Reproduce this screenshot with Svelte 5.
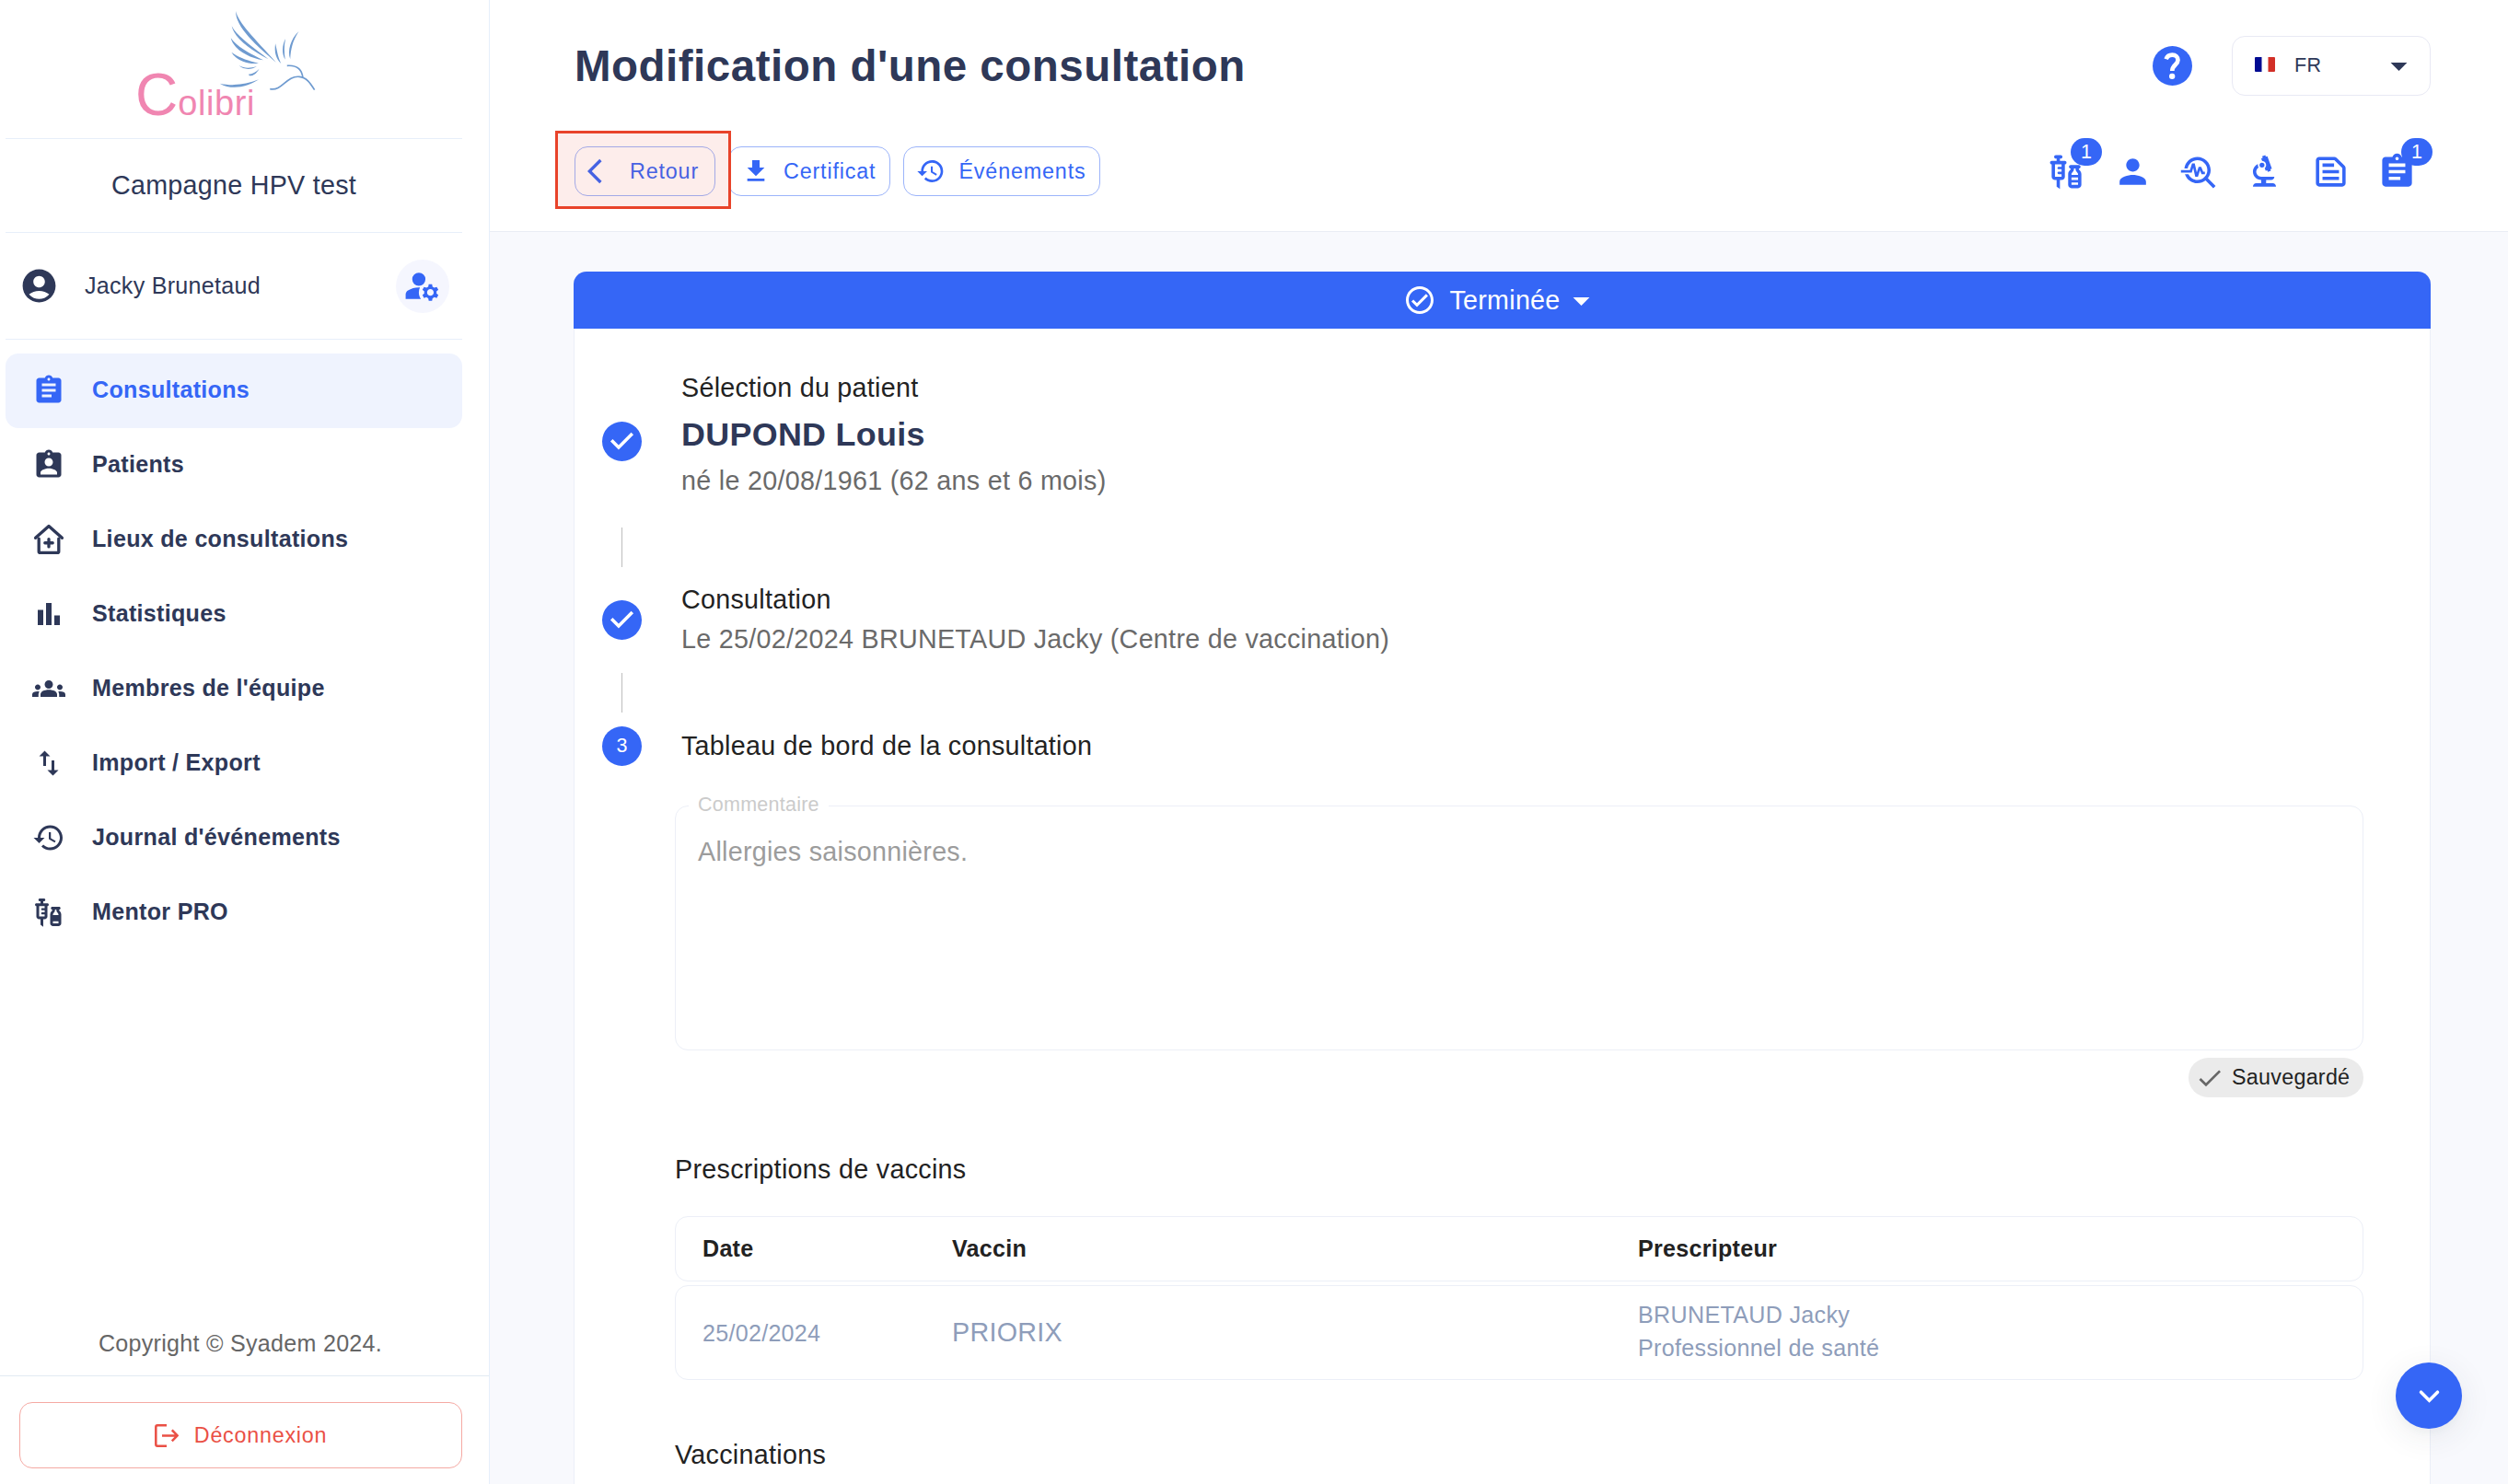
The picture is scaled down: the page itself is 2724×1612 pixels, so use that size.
<script>
  const icons = {
    assignment:
      'M19 3h-4.18C14.4 1.84 13.3 1 12 1s-2.4.84-2.82 2H5c-1.1 0-2 .9-2 2v14c0 1.1.9 2 2 2h14c1.1 0 2-.9 2-2V5c0-1.1-.9-2-2-2m-7 0c.55 0 1 .45 1 1s-.45 1-1 1-1-.45-1-1 .45-1 1-1m2 14H7v-2h7zm3-4H7v-2h10zm0-4H7V7h10z',
    assignmentInd:
      'M19 3h-4.18C14.4 1.84 13.3 1 12 1c-1.3 0-2.4.84-2.82 2H5c-1.1 0-2 .9-2 2v14c0 1.1.9 2 2 2h14c1.1 0 2-.9 2-2V5c0-1.1-.9-2-2-2zm-7 0c.55 0 1 .45 1 1s-.45 1-1 1-1-.45-1-1 .45-1 1-1zm0 4c1.66 0 3 1.34 3 3s-1.34 3-3 3-3-1.34-3-3 1.34-3 3-3zm6 12H6v-1.4c0-2 4-3.1 6-3.1s6 1.1 6 3.1V19z',
    bars: 'M4 9h4v11H4zm12 4h4v7h-4zm-6-9h4v16h-4z',
    groups:
      'M12 12.75c1.63 0 3.07.39 4.24.9 1.08.48 1.76 1.56 1.76 2.73V18H6v-1.61c0-1.18.68-2.26 1.76-2.73 1.17-.52 2.61-.91 4.24-.91M4 13c1.1 0 2-.9 2-2s-.9-2-2-2-2 .9-2 2 .9 2 2 2m1.13 1.1c-.37-.06-.74-.1-1.13-.1-.99 0-1.93.21-2.78.58C.48 14.9 0 15.62 0 16.43V18h4.5v-1.61c0-.83.23-1.61.63-2.29M20 13c1.1 0 2-.9 2-2s-.9-2-2-2-2 .9-2 2 .9 2 2 2m4 3.43c0-.81-.48-1.53-1.22-1.85-.85-.37-1.79-.58-2.78-.58-.39 0-.76.04-1.13.1.4.68.63 1.46.63 2.29V18H24zM12 6c1.66 0 3 1.34 3 3s-1.34 3-3 3-3-1.34-3-3 1.34-3 3-3',
    swap: 'M9 3 5 6.99h3V14h2V6.99h3zm7 14.01V10h-2v7.01h-3L15 21l4-3.99z',
    history:
      'M13 3c-4.97 0-9 4.03-9 9H1l3.89 3.89.07.14L9 12H6c0-3.87 3.13-7 7-7s7 3.13 7 7-3.13 7-7 7c-1.93 0-3.68-.79-4.94-2.06l-1.42 1.42C8.27 19.99 10.51 21 13 21c4.97 0 9-4.03 9-9s-4.03-9-9-9m-1 5v5l4.28 2.54.72-1.21-3.5-2.08V8z',
    vaccinesFilled:
      'M11 5.5H8V4h.5c.55 0 1-.45 1-1s-.45-1-1-1h-3c-.55 0-1 .45-1 1s.45 1 1 1H6v1.5H3c-.55 0-1 .45-1 1s.45 1 1 1V15c0 1.1.9 2 2 2h1v4l2 1.5V17h1c1.1 0 2-.9 2-2V7.5c.55 0 1-.45 1-1s-.45-1-1-1M9 9H7.25c-.41 0-.75.34-.75.75s.34.75.75.75H9V12H7.25c-.41 0-.75.34-.75.75s.34.75.75.75H9V15H5V7.5h4zm10.5 1.5V10c.55 0 1-.45 1-1s-.45-1-1-1h-5c-.55 0-1 .45-1 1s.45 1 1 1v.5c0 .5-1.5 1.16-1.5 3V20c0 1.1.9 2 2 2h4c1.1 0 2-.9 2-2v-6.5c0-1.84-1.5-2.5-1.5-3m-3 0V10h1v.5c0 1.6 1.5 2 1.5 3V14h-4v-.5c0-1 1.5-1.4 1.5-3M15 20v-1.5h4V20z',
    vaccines:
      'M11 5.5H8V4h.5c.55 0 1-.45 1-1s-.45-1-1-1h-3c-.55 0-1 .45-1 1s.45 1 1 1H6v1.5H3c-.55 0-1 .45-1 1s.45 1 1 1V15c0 1.1.9 2 2 2h1v4l2 1.5V17h1c1.1 0 2-.9 2-2V7.5c.55 0 1-.45 1-1s-.45-1-1-1M9 9H7.25c-.41 0-.75.34-.75.75s.34.75.75.75H9V12H7.25c-.41 0-.75.34-.75.75s.34.75.75.75H9V15H5V7.5h4zm10.5 1.5V10c.55 0 1-.45 1-1s-.45-1-1-1h-5c-.55 0-1 .45-1 1s.45 1 1 1v.5c0 .5-1.5 1.16-1.5 3V20c0 1.1.9 2 2 2h4c1.1 0 2-.9 2-2v-6.5c0-1.84-1.5-2.5-1.5-3m-3 0V10h1v.5c0 1.6 1.5 2 1.5 3V14h-4v-.5c0-1 1.5-1.4 1.5-3m2.5 5V17h-4v-1.5zM15 20v-1.5h4V20z',
    person:
      'M12 12c2.21 0 4-1.79 4-4s-1.79-4-4-4-4 1.79-4 4 1.79 4 4 4m0 2c-2.67 0-8 1.34-8 4v2h16v-2c0-2.66-5.33-4-8-4',
    troubleshoot:
      'm22 20.59-4.69-4.69C18.37 14.55 19 12.85 19 11c0-4.42-3.58-8-8-8-4.08 0-7.44 3.05-7.93 7h2.02C5.57 7.17 8.03 5 11 5c3.31 0 6 2.69 6 6s-2.69 6-6 6c-2.42 0-4.5-1.44-5.45-3.5H3.4C4.45 16.69 7.46 19 11 19c1.85 0 3.55-.63 4.9-1.69L20.59 22zM8.43 9.69 9.65 15h1.64l1.26-3.78.95 2.28h2V12h-1l-1.25-3h-1.54l-1.12 3.37L9.35 7H7.7l-1.25 4H1v1.5h6.55z',
    microscope:
      'M7 19c-1.1 0-2 .9-2 2h14c0-1.1-.9-2-2-2h-4v-2h3c1.1 0 2-.9 2-2h-8c-1.66 0-3-1.34-3-3 0-1.09.59-2.04 1.46-2.56C8.17 9.03 8 8.54 8 8c0-.21.04-.42.09-.62C6.28 8.13 5 9.92 5 12c0 2.76 2.24 5 5 5v2zM10.56 5.51C11.91 5.54 13 6.64 13 8c0 .75-.33 1.41-.85 1.87l.59 1.62.94-.34.34.94 1.88-.68-.34-.94.94-.34-2.74-7.52-.94.34-.34-.94-1.88.68.34.94-.94.35zM10.5 6.5a1.5 1.5 0 1 0 0 3 1.5 1.5 0 0 0 0-3',
    snippet:
      'M14.17 5 19 9.83V19H5V5zm0-2H5c-1.1 0-2 .9-2 2v14c0 1.1.9 2 2 2h14c1.1 0 2-.9 2-2V9.83c0-.53-.21-1.04-.59-1.41l-4.83-4.83c-.37-.38-.88-.59-1.41-.59M7 15h10v2H7zm0-4h10v2H7zm0-4h7v2H7z',
    account:
      'M12 2C6.48 2 2 6.48 2 12s4.48 10 10 10 10-4.48 10-10S17.52 2 12 2m0 4c1.93 0 3.5 1.57 3.5 3.5S13.93 13 12 13s-3.5-1.57-3.5-3.5S10.07 6 12 6m0 14c-2.03 0-4.43-.82-6.14-2.88C7.55 15.8 9.68 15 12 15s4.45.8 6.14 2.12C16.43 19.18 14.03 20 12 20',
    manage:
      'M10 4a4 4 0 1 0 0 8 4 4 0 0 0 0-8M10.67 13.02c-.22-.01-.44-.02-.67-.02-2.42 0-4.68.67-6.61 1.82-.88.52-1.39 1.5-1.39 2.53V20h9.26c-.79-1.13-1.26-2.51-1.26-4 0-1.07.25-2.07.67-2.98M20.75 16c0-.22-.03-.42-.06-.63l1.14-1.01-1-1.73-1.45.49c-.32-.27-.68-.48-1.08-.63L18 11h-2l-.3 1.49c-.4.15-.76.36-1.08.63l-1.45-.49-1 1.73 1.14 1.01c-.03.21-.06.41-.06.63s.03.42.06.63l-1.14 1.01 1 1.73 1.45-.49c.32.27.68.48 1.08.63L16 21h2l.3-1.49c.4-.15.76-.36 1.08-.63l1.45.49 1-1.73-1.14-1.01c.03-.21.06-.41.06-.63M17 18c-1.1 0-2-.9-2-2s.9-2 2-2 2 .9 2 2-.9 2-2 2',
    download: 'M19 9h-4V3H9v6H5l7 7 7-7zM5 18v2h14v-2z',
    back: 'M11.67 3.87 9.9 2.1 0 12l9.9 9.9 1.77-1.77L3.54 12z',
    dropdown: 'm7 10 5 5 5-5z',
    checkCircle:
      'M12 2C6.48 2 2 6.48 2 12s4.48 10 10 10 10-4.48 10-10S17.52 2 12 2m0 18c-4.41 0-8-3.59-8-8s3.59-8 8-8 8 3.59 8 8-3.59 8-8 8m4.59-12.42L10 14.17l-2.59-2.58L6 13l4 4 8-8z',
    stepDone:
      'M12 0a12 12 0 1 0 0 24 12 12 0 0 0 0-24zm-2 17l-5-5 1.4-1.4 3.6 3.6 7.6-7.6L19 8l-9 9z',
    check: 'M9 16.17 4.83 12l-1.42 1.41L9 19 21 7l-1.41-1.41z',
  };

  const nav = [
    { label: 'Consultations', icon: 'assignment', active: true },
    { label: 'Patients', icon: 'assignmentInd' },
    { label: 'Lieux de consultations', icon: 'house' },
    { label: 'Statistiques', icon: 'bars' },
    { label: "Membres de l'équipe", icon: 'groups' },
    { label: 'Import / Export', icon: 'swap' },
    { label: "Journal d'événements", icon: 'history' },
    { label: 'Mentor PRO', icon: 'vaccinesFilled' },
  ];

  const tools = [
    { icon: 'vaccines', badge: 1 },
    { icon: 'person' },
    { icon: 'troubleshoot' },
    { icon: 'microscope' },
    { icon: 'snippet' },
    { icon: 'assignment', badge: 1 },
  ];
</script>

{#snippet icon(name, size)}
  <svg class="icon {size}" viewBox="0 0 24 24" aria-hidden="true">
    {#if name === 'house'}
      <g fill="none" stroke="currentColor" stroke-width="2.2" stroke-linecap="round" stroke-linejoin="round">
        <path d="M2.4 10.9 12 2.3l9.6 8.6" />
        <path d="M4.8 11.4v9.2q0 1 1 1h12.4q1 0 1-1v-9.2" />
        <path d="M12 11.7v5.6M9.2 14.5h5.6" />
      </g>
    {:else}
      <path d={icons[name]} />
    {/if}
  </svg>
{/snippet}

<div class="app">
  <aside>
    <div class="logo">
      <span class="brand"><span class="cap">C</span>olibri</span>
      <svg class="bird" viewBox="690 30 306 270" preserveAspectRatio="none" aria-hidden="true">
        <g fill="#6f9bd0">
          <path d="M743 36C750 74 802 124 870 203C812 152 740 88 743 36Z" />
          <path d="M730 85C746 118 792 150 846 193C790 162 740 128 730 85Z" />
          <path d="M727 124C746 152 786 174 830 196C782 188 735 160 727 124Z" />
          <path d="M729 170C750 187 780 198 815 206C782 211 744 197 729 170Z" />
          <path d="M753 214C770 223 788 223 809 216C792 229 766 227 753 214Z" />
          <path d="M783 242C796 241 806 235 817 224C808 240 797 248 786 247Z" />
          <path d="M692 272C734 281 770 276 816 259C778 284 730 295 692 272Z" />
          <path d="M868 142C874 168 876 186 886 207C870 192 864 170 868 142Z" />
          <path d="M900 126C895 150 896 172 899 194C888 176 889 148 900 126Z" />
          <path d="M942 102C922 134 917 160 915 192C905 166 917 126 942 102Z" />
        </g>
        <g fill="none" stroke="#6f9bd0" stroke-width="5">
          <path d="M905 214C932 212 952 222 955 254" />
          <path d="M851 290C890 298 902 246 944 250C966 252 978 270 992 293" />
        </g>
      </svg>
    </div>
    <div class="campaign">Campagne HPV test</div>
    <div class="user">
      {@render icon('account', 'lg')}
      <span class="user-name">Jacky Brunetaud</span>
      <button class="manage" aria-label="Compte">{@render icon('manage', 'lg')}</button>
    </div>
    <nav>
      {#each nav as item}
        <a class:active={item.active}>{@render icon(item.icon, 'md')}<span>{item.label}</span></a>
      {/each}
    </nav>
    <div class="copyright">Copyright © Syadem 2024.</div>
    <div class="logout">
      <button>
        <svg class="exit" viewBox="0 0 26 25" aria-hidden="true">
          <path d="M13 1.3H3q-1.7 0-1.7 1.7V22q0 1.7 1.7 1.7H13" />
          <path d="M8 12.4H24M18.8 6.4 24.6 12.4 18.8 18.4" />
        </svg>
        Déconnexion
      </button>
    </div>
  </aside>

  <main>
    <header>
      <div class="row top">
        <h1>Modification d'une consultation</h1>
        <svg class="help" viewBox="0 0 129 129" aria-hidden="true">
          <circle cx="64.5" cy="64.5" r="64.5" />
          <path d="M44 43C47 34 54 29 64 29C75 29 82.500 36 82.500 46C82.500 61 64 61 64 81" />
          <circle class="dot" cx="63.5" cy="98.500" r="9.500" />
        </svg>
        <div class="lang">
          <svg class="flag" viewBox="0 0 22 16" aria-hidden="true">
            <path fill="#000b92" d="M1 0H7.500V16H1Q0 16 0 15V1Q0 0 1 0Z" />
            <path fill="#d22f27" d="M14.500 0H21Q22 0 22 1V15Q22 16 21 16H14.500Z" />
          </svg>
          <span>FR</span>
          {@render icon('dropdown', 'lg')}
        </div>
      </div>
      <div class="row">
        <div class="actions">
          <button class="marked">{@render icon('back', 'sm')}Retour</button>
          <button>{@render icon('download', 'sm')}Certificat</button>
          <button>{@render icon('history', 'sm')}Événements</button>
        </div>
        <div class="tools">
          {#each tools as tool}
            <span class="tool">
              {@render icon(tool.icon, 'lg')}
              {#if tool.badge}<span class="badge">{tool.badge}</span>{/if}
            </span>
          {/each}
        </div>
      </div>
    </header>

    <section class="card">
      <div class="status">
        {@render icon('checkCircle', 'md')}
        <span>Terminée</span>
        {@render icon('dropdown', 'lg')}
      </div>
      <div class="body">
        <div class="step first">
          {@render icon('stepDone', 'lg')}
          <div>
            <p>Sélection du patient</p>
            <h2>DUPOND Louis</h2>
            <p class="muted">né le 20/08/1961 (62 ans et 6 mois)</p>
          </div>
        </div>
        <div class="connector"></div>
        <div class="step second">
          {@render icon('stepDone', 'lg')}
          <div>
            <p>Consultation</p>
            <p class="muted">Le 25/02/2024 BRUNETAUD Jacky (Centre de vaccination)</p>
          </div>
        </div>
        <div class="connector"></div>
        <div class="step third">
          <span class="number">3</span>
          <p>Tableau de bord de la consultation</p>
        </div>

        <div class="content">
          <fieldset>
            <legend>Commentaire</legend>
            <p>Allergies saisonnières.</p>
          </fieldset>
          <div class="saved">{@render icon('check', 'sm')}<span>Sauvegardé</span></div>

          <h3>Prescriptions de vaccins</h3>
          <div class="line head">
            <span>Date</span><span>Vaccin</span><span>Prescripteur</span>
          </div>
          <div class="line entry">
            <span>25/02/2024</span>
            <span class="vaccine">PRIORIX</span>
            <span class="prescriber">BRUNETAUD Jacky<br />Professionnel de santé</span>
          </div>
          <h3 class="next">Vaccinations</h3>
        </div>
      </div>
    </section>
  </main>

  <button class="fab" aria-label="Défiler">
    <svg class="icon lg" viewBox="0 0 24 24" aria-hidden="true">
      <path class="chevron" d="M7 9.600 12 14.600 17 9.600" />
    </svg>
  </button>
</div>

<style>
  :global(body) {
    margin: 0;
    overflow: hidden;
  }
  .app {
    display: flex;
    width: 2724px;
    height: 1612px;
    overflow: hidden;
    position: relative;
    background: #f8f9fd;
    color: #2e3858;
    font: 25.1px 'Liberation Sans', Arial, Helvetica, sans-serif;
    letter-spacing: 0.27px;
  }
  *,
  *::after {
    box-sizing: border-box;
  }
  p,
  h1,
  h2,
  h3 {
    margin: 0;
  }
  button {
    font: inherit;
    color: inherit;
    letter-spacing: inherit;
    background: none;
    border: 0;
    padding: 0;
  }
  .icon {
    display: block;
    flex: none;
    fill: currentColor;
  }
  .sm {
    width: 32px;
    height: 32px;
  }
  .md {
    width: 36px;
    height: 36px;
  }
  .lg {
    width: 43px;
    height: 43px;
  }

  aside {
    width: 532px;
    flex: none;
    display: flex;
    flex-direction: column;
    background: #fff;
    border-right: 1px solid #e6effb;
  }
  .logo,
  .campaign,
  .user {
    margin: 0 29px 0 6px;
    border-bottom: 1px solid #e7effa;
  }
  .logo {
    height: 151px;
    position: relative;
  }
  .brand {
    position: absolute;
    left: 141px;
    bottom: 16px;
    line-height: 1;
    height: 62px;
    white-space: nowrap;
    font-size: 38px;
    letter-spacing: 0.6px;
    color: #f086b1;
  }
  .cap {
    font-size: 64px;
    letter-spacing: 0;
    line-height: 62px;
  }
  .bird {
    position: absolute;
    left: 232px;
    top: 10px;
    width: 105px;
    height: 90px;
  }
  .campaign {
    height: 102px;
    line-height: 101px;
    text-align: center;
    font-size: 28.7px;
  }
  .user {
    height: 116px;
    display: flex;
    align-items: center;
    padding: 0 14px 0 15px;
  }
  .user-name {
    flex: 1;
    margin-left: 28px;
  }
  .manage {
    width: 58px;
    height: 58px;
    border-radius: 50%;
    background: #f5f6fe;
    color: #3566f6;
    display: flex;
    align-items: center;
    padding-left: 7px;
  }
  nav {
    margin: 15px 29px 0 6px;
    flex: 1;
  }
  nav a {
    display: flex;
    align-items: center;
    height: 81px;
    padding: 0 0 2px 29px;
    gap: 29px;
    border-radius: 14px;
    font-weight: 700;
    letter-spacing: 0.29px;
  }
  nav a.active {
    background: #eff3fe;
    color: #3566f6;
  }
  .copyright {
    height: 70px;
    line-height: 70px;
    margin: 0 9px 0 0;
    text-align: center;
    color: #666;
  }
  .logout {
    height: 118px;
    padding: 28px 29px 0 21px;
    border-top: 1px solid #e2eaf2;
  }
  .logout button {
    width: 100%;
    height: 72px;
    display: flex;
    align-items: center;
    justify-content: center;
    gap: 17px;
    border: 1px solid #f5a9a3;
    border-radius: 14px;
    color: #ea5045;
    font-size: 23.3px;
    letter-spacing: 0.76px;
  }
  .exit {
    width: 26px;
    height: 25px;
    fill: none;
    stroke: currentColor;
    stroke-width: 2.5;
  }

  main {
    flex: 1;
    min-width: 0;
  }
  header {
    height: 252px;
    padding: 39px 84px 0 92px;
    background: #fff;
    border-bottom: 1px solid #eaedf4;
  }
  .row {
    display: flex;
    align-items: center;
  }
  .top {
    height: 65px;
    margin-bottom: 55px;
  }
  h1 {
    flex: 1;
    font-size: 47.5px;
    line-height: 65px;
    letter-spacing: 0.5px;
  }
  .help {
    width: 43px;
    height: 43px;
    fill: #3566f6;
    margin-right: 43px;
  }
  .help path {
    fill: none;
    stroke: #fff;
    stroke-width: 14;
  }
  .help .dot {
    fill: #fff;
  }
  .lang {
    width: 216px;
    height: 65px;
    border: 1px solid #e8e9f4;
    border-radius: 14px;
    display: flex;
    align-items: center;
    padding: 0 12px 0 24px;
    font-size: 21.5px;
  }
  .lang span {
    flex: 1;
    margin-left: 21px;
  }
  .flag {
    width: 22px;
    height: 16px;
    margin-bottom: 4px;
  }
  .actions {
    flex: 1;
    display: flex;
    gap: 14px;
  }
  .actions button {
    height: 54px;
    display: flex;
    align-items: center;
    gap: 14px;
    padding: 0 15px 0 13px;
    border: 1px solid #9cb4fa;
    border-radius: 14px;
    color: #3566f6;
    font-size: 23.3px;
    letter-spacing: 0.85px;
  }
  .actions .marked {
    position: relative;
    padding-right: 17px;
  }
  .marked::after {
    content: '';
    position: absolute;
    left: -22px;
    top: -18px;
    width: 191px;
    height: 85px;
    border: 3px solid #e8432a;
    background: rgba(232, 67, 42, 0.095);
    z-index: 1;
  }
  .tools {
    display: flex;
    gap: 28.8px;
    margin-right: 15px;
  }
  .tool {
    position: relative;
    color: #3566f6;
  }
  .badge {
    position: absolute;
    left: 26px;
    top: -15px;
    width: 34px;
    height: 30px;
    border-radius: 15px;
    background: #3566f6;
    color: #fff;
    font-size: 21.5px;
    line-height: 30px;
    text-align: center;
  }

  .card {
    margin: 43px 84px 0 91px;
    height: 1400px;
    background: #fff;
    border: 1px solid #ebeff8;
    border-top: 0;
    border-radius: 14px;
    font-size: 28.7px;
    color: #222;
  }
  .status {
    height: 62px;
    margin: 0 -1px;
    background: #3566f6;
    color: #fff;
    border-radius: 14px 14px 0 0;
    display: flex;
    align-items: center;
    justify-content: center;
  }
  .status span {
    margin: 0 1px 0 14px;
  }
  .body {
    padding: 42px 72px 0 30px;
    line-height: 43px;
  }
  .step {
    display: flex;
    align-items: center;
    gap: 43px;
  }
  .step > .icon {
    color: #3566f6;
  }
  .first {
    height: 161px;
  }
  .first > div {
    padding-bottom: 15px;
  }
  .second {
    height: 89px;
    margin-top: 13px;
  }
  .second > div {
    padding-bottom: 2px;
  }
  .third {
    height: 43px;
    margin-top: 15px;
  }
  .number {
    width: 43px;
    height: 43px;
    border-radius: 50%;
    background: #3566f6;
    color: #fff;
    font-size: 21.5px;
    text-align: center;
  }
  h2 {
    font-size: 35.9px;
    line-height: 58px;
    letter-spacing: 0.3px;
    color: #2e3858;
  }
  .muted {
    color: #6a6a6a;
    letter-spacing: 0.29px;
  }
  .connector {
    width: 1px;
    height: 43px;
    margin: 13px 0 0 21px;
    background: #bdbdbd;
  }
  .content {
    margin: 31px 0 0 79px;
  }
  fieldset {
    height: 278px;
    min-width: 0;
    margin: 0;
    padding: 0 14px;
    border: 1px solid #eceff7;
    border-radius: 14px;
  }
  legend {
    height: 24px;
    padding: 0 10px;
    font-size: 21.5px;
    line-height: 22px;
    letter-spacing: 0.25px;
    color: #cbcbcb;
  }
  fieldset p {
    margin: 17px 10px 0;
    color: #9c9c9c;
  }
  .saved {
    width: 190px;
    height: 43px;
    margin: 8px 0 0 auto;
    padding-left: 7px;
    display: flex;
    align-items: center;
    gap: 8px;
    border-radius: 22px;
    background: #ebebeb;
    font-size: 23.3px;
  }
  .saved :global(.icon) {
    color: #666;
  }
  h3 {
    margin: 57px 0 29px;
    font-size: inherit;
    font-weight: 400;
    letter-spacing: 0.3px;
  }
  .next {
    margin-top: 60px;
  }
  .line {
    display: grid;
    grid-template-columns: 271px 745px 1fr;
    align-items: center;
    padding: 0 29px 2px;
    border: 1px solid #eceff7;
    border-radius: 14px;
    font-size: 25.1px;
    line-height: 36px;
  }
  .head {
    height: 71px;
    font-weight: 700;
  }
  .entry {
    height: 103px;
    margin-top: 4px;
    color: #8e9dba;
  }
  .entry span:first-child {
    padding-top: 2px;
  }
  .prescriber {
    padding-bottom: 1px;
    letter-spacing: 0.32px;
  }
  .vaccine {
    font-size: 28.7px;
  }

  .fab {
    position: absolute;
    right: 50px;
    bottom: 60px;
    width: 72px;
    height: 72px;
    border-radius: 50%;
    background: #3566f6;
    display: grid;
    place-items: center;
    box-shadow:
      0 5px 9px -2px rgba(60, 70, 90, 0.04),
      0 8px 36px rgba(40, 50, 70, 0.09);
  }
  .chevron {
    fill: none;
    stroke: #fff;
    stroke-width: 2;
    stroke-linecap: round;
  }
</style>
